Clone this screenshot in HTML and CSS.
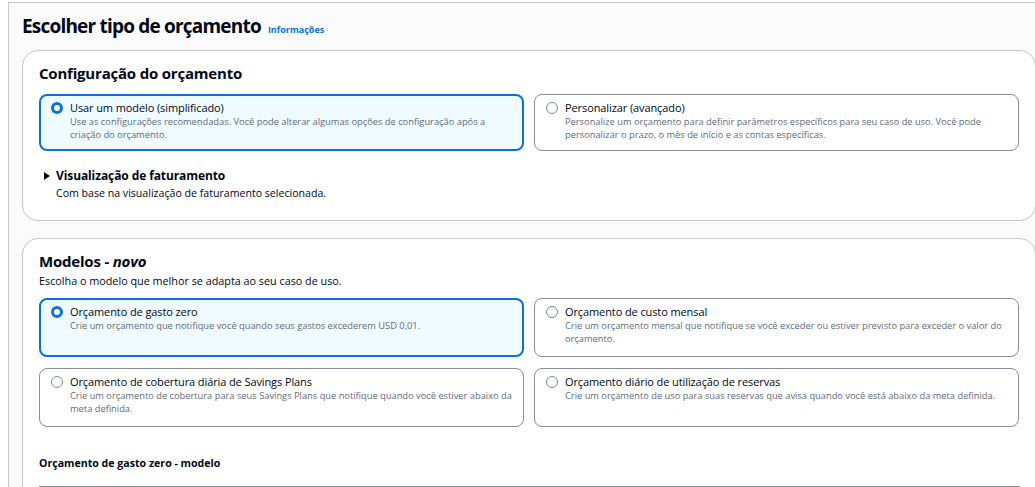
FILE: index.html
```html
<!DOCTYPE html>
<html lang="pt">
<head>
<meta charset="utf-8">
<link rel="stylesheet" href="styles.css">
</head>
<body>
<div class="page">
  <div class="page-head">
    <h1 class="title">Escolher tipo de orçamento</h1>
    <a class="info" href="#">Informações</a>
  </div>

  <section class="card">
    <h2 class="card-title">Configuração do orçamento</h2>
    <div class="tiles">
      <div class="tile selected">
        <span class="radio on"></span>
        <div class="tile-text">
          <div class="tile-label">Usar um modelo (simplificado)</div>
          <div class="tile-desc">Use as configurações recomendadas. Você pode alterar algumas opções de configuração após a criação do orçamento.</div>
        </div>
      </div>
      <div class="tile">
        <span class="radio"></span>
        <div class="tile-text">
          <div class="tile-label">Personalizar (avançado)</div>
          <div class="tile-desc">Personalize um orçamento para definir parâmetros específicos para seu caso de uso. Você pode personalizar o prazo, o mês de início e as contas específicas.</div>
        </div>
      </div>
    </div>
    <div class="expander">
      <div class="exp-head"><span class="caret"></span><span class="exp-title">Visualização de faturamento</span></div>
      <div class="exp-desc">Com base na visualização de faturamento selecionada.</div>
    </div>
  </section>

  <section class="card card2">
    <h2 class="card-title">Modelos - <em>novo</em></h2>
    <p class="card-desc">Escolha o modelo que melhor se adapta ao seu caso de uso.</p>
    <div class="tiles grid2">
      <div class="tile selected">
        <span class="radio on"></span>
        <div class="tile-text">
          <div class="tile-label">Orçamento de gasto zero</div>
          <div class="tile-desc">Crie um orçamento que notifique você quando seus gastos excederem USD 0,01.</div>
        </div>
      </div>
      <div class="tile">
        <span class="radio"></span>
        <div class="tile-text">
          <div class="tile-label">Orçamento de custo mensal</div>
          <div class="tile-desc">Crie um orçamento mensal que notifique se você exceder ou estiver previsto para exceder o valor do orçamento.</div>
        </div>
      </div>
      <div class="tile">
        <span class="radio"></span>
        <div class="tile-text">
          <div class="tile-label">Orçamento de cobertura diária de Savings Plans</div>
          <div class="tile-desc">Crie um orçamento de cobertura para seus Savings Plans que notifique quando você estiver abaixo da meta definida.</div>
        </div>
      </div>
      <div class="tile">
        <span class="radio"></span>
        <div class="tile-text">
          <div class="tile-label">Orçamento diário de utilização de reservas</div>
          <div class="tile-desc">Crie um orçamento de uso para suas reservas que avisa quando você está abaixo da meta definida.</div>
        </div>
      </div>
    </div>
    <h3 class="sub-title">Orçamento de gasto zero - modelo</h3>
    <div class="divider"></div>
  </section>
</div>
</body>
</html>
```

FILE: styles.css
```css
* { box-sizing: border-box; }
html, body { margin: 0; padding: 0; background: #ffffff; }
body {
  font-family: "Open Sans", "Noto Sans", sans-serif;
  color: #000716;
  overflow: hidden;
  height: 487px;
}
.page {
  margin: 2px 0 0 8px;
  border-left: 1px solid #c6c6cd;
  border-top: 1px solid #c6c6cd;
  background: #fbfbfb;
  height: 600px;
  padding: 8px 0 0 13px;
  width: 1030px;
}
.page-head {
  display: flex;
  align-items: baseline;
  gap: 7px;
  height: 31px;
}
.title {
  margin: 0;
  font-size: 19px;
  font-weight: 700;
  letter-spacing: -0.8px;
  line-height: 30px;
}
.info {
  color: #0972d3;
  font-size: 9px;
  font-weight: 700;
  text-decoration: none;
}
.card {
  margin-top: 8px;
  background: #ffffff;
  border: 1px solid #c6c6cd;
  border-radius: 16px;
  width: 1014px;
  padding: 11px 16px 0 16px;
  height: 171px;
}
.card2 {
  margin-top: 17px;
  height: 300px;
}
.card-title {
  margin: 0;
  font-size: 15px;
  font-weight: 700;
  line-height: 22px;
  letter-spacing: -0.2px;
}
.card-title em { font-style: italic; }
.card-desc {
  margin: 0;
  font-size: 10.8px;
  line-height: 18px;
  color: #000716;
}
.tiles {
  display: grid;
  grid-template-columns: 485px 485px;
  column-gap: 10px;
  row-gap: 11px;
  margin-top: 10px;
}
.card2 .tiles { margin-top: 8px; }
.tile {
  display: flex;
  gap: 7px;
  border: 1px solid #8c8c94;
  border-radius: 8px;
  padding: 6px 6px 8px 11px;
  min-height: 57px;
  background: #ffffff;
}
.grid2 .tile { min-height: 59px; }
.tile.selected {
  border: 2px solid #0972d3;
  background: #f0fbff;
  padding: 5px 5px 7px 10px;
}
.radio {
  flex: none;
  width: 12px;
  height: 12px;
  margin-top: 1px;
  border-radius: 50%;
  border: 1px solid #7d8998;
  background: #fff;
}
.radio.on {
  border: 3.5px solid #0972d3;
}
.tile-label {
  font-size: 11px;
  line-height: 14px;
  letter-spacing: -0.1px;
}
.tile-desc {
  font-size: 9.3px;
  line-height: 13px;
  color: #5f6b7a;
}
.expander { margin-top: 17px; }
.exp-head {
  display: flex;
  align-items: center;
  gap: 6px;
  margin-left: 5px;
}
.caret {
  width: 0; height: 0;
  border-left: 6px solid #000716;
  border-top: 4px solid transparent;
  border-bottom: 4px solid transparent;
}
.exp-title {
  font-size: 12px;
  font-weight: 700;
  line-height: 16px;
  letter-spacing: -0.1px;
}
.exp-desc {
  margin-left: 17px;
  font-size: 10.6px;
  line-height: 18px;
}
.sub-title {
  margin: 28px 0 0 0;
  font-size: 10.6px;
  font-weight: 700;
  line-height: 16px;
}
.divider {
  margin-top: 15px;
  width: 981px;
  border-top: 1px solid #8c8c94;
}
```
